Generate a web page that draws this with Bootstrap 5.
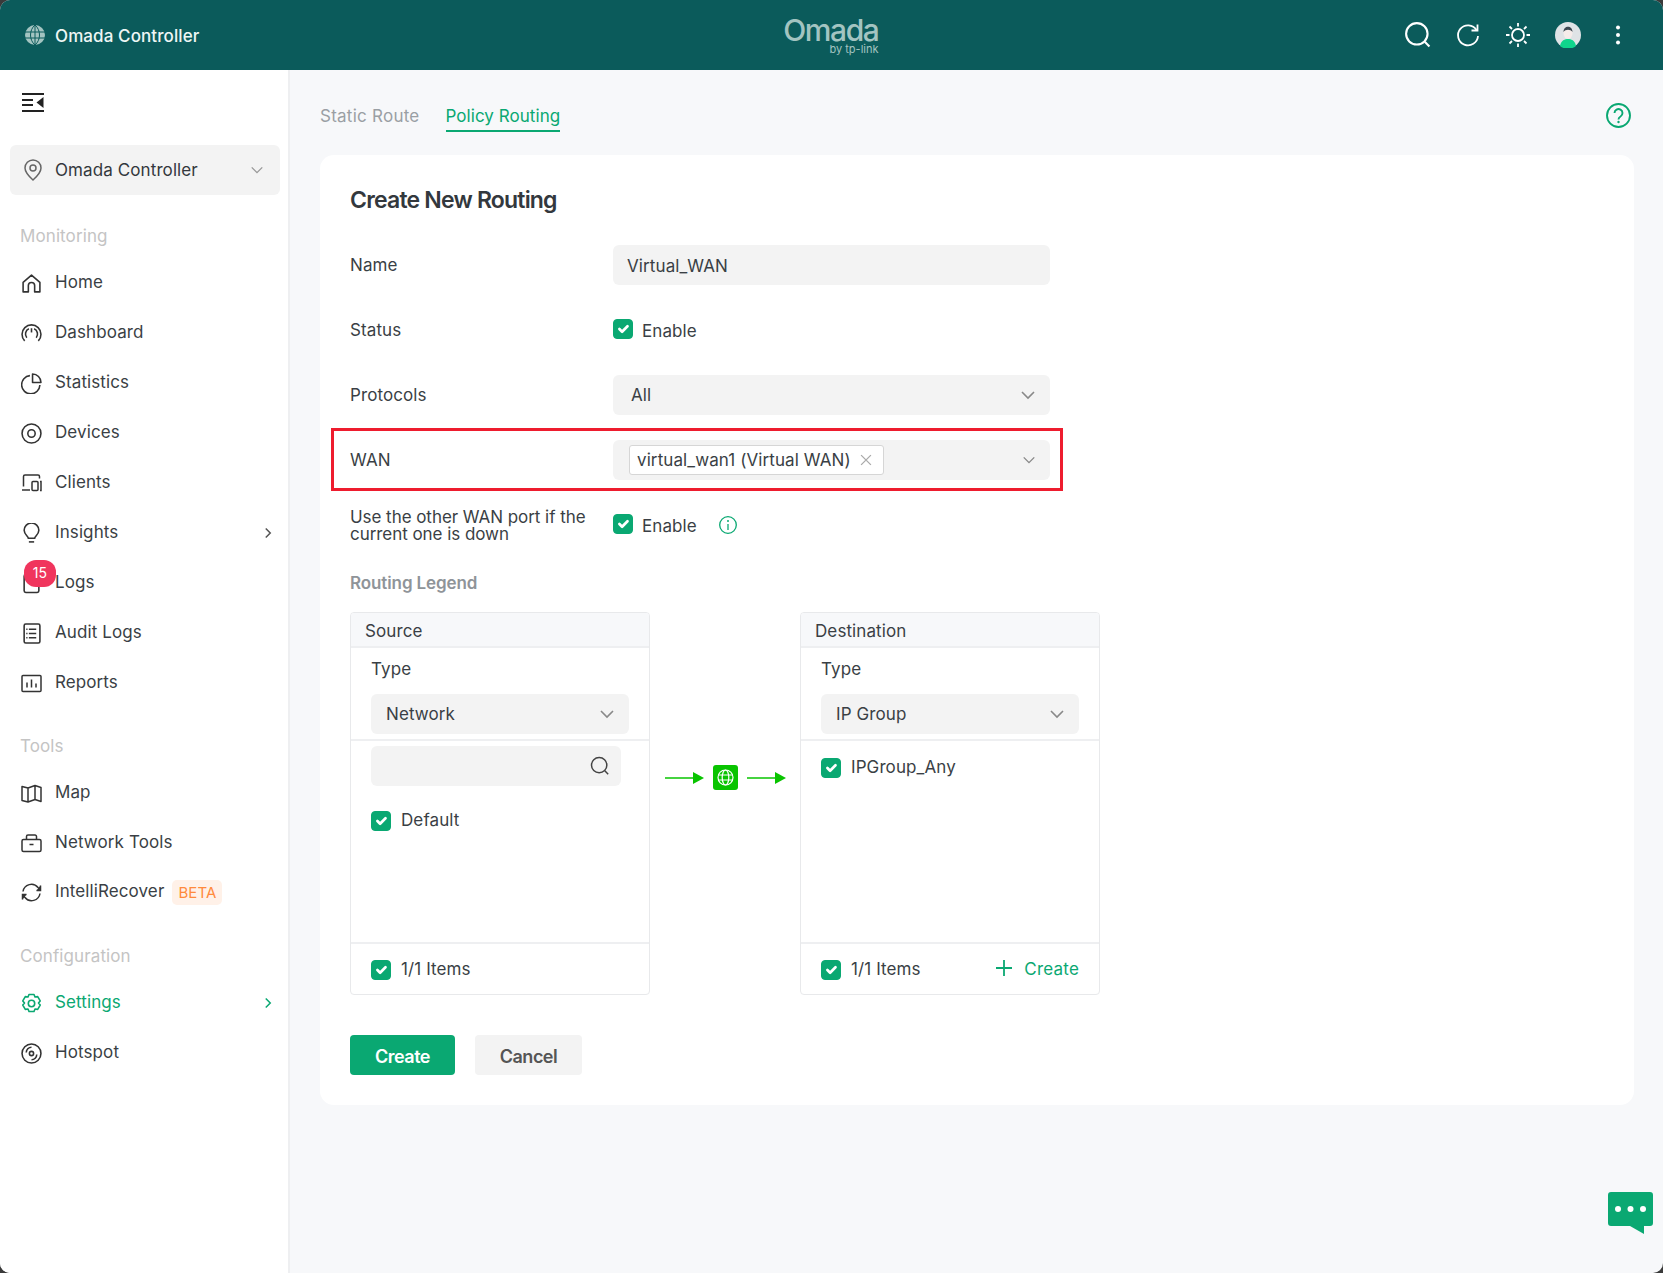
<!DOCTYPE html>
<html lang="en">
<head>
<meta charset="utf-8">
<title>Omada Controller</title>
<link href="https://cdn.jsdelivr.net/npm/bootstrap@5.3.0/dist/css/bootstrap.min.css" rel="stylesheet">
<style>
html,body{height:100%;margin:0;overflow:hidden}
body{background:#3a3a3a;font-family:Inter,"Noto Sans",sans-serif;font-size:17px;color:#3a3f45;letter-spacing:.1px}
.om-shell{height:100vh;border-radius:10px;overflow:hidden;background:#f7f8fa}
.om-top{height:70px;background:#0b5b5b;color:#fff}
.om-brand{flex:1 1 0;padding-left:24px;gap:9px;font-size:17px;font-weight:500;color:#eef6f5}
.om-brand span{padding-top:3px}
.om-logo{color:#a3c4c1;width:96px;text-align:right;padding-top:2px;margin-left:6px}
.om-logo-main{font-size:30px;font-weight:500;letter-spacing:-1.4px;line-height:26px}
.om-logo-sub{font-size:11px;letter-spacing:0;line-height:13px}
.om-top-tools{flex:1 1 0;gap:24px;padding-right:32px}
.om-top-tools svg{display:block}
.om-top-tools .om-top-find{margin-right:-1px}
.om-body{height:calc(100vh - 70px)}
.om-side{width:290px;background:#fff;border-right:2px solid #eeeff1;flex:none;padding:0 8px 0 10px}
.om-toggle{height:75px;padding:0 0 33px 12px}
.om-site{height:50px;background:#f3f3f3;border-radius:6px;padding:2px 16px 0 13px;gap:12px;color:#33383d;width:270px}
.om-site svg{margin-top:-2px}
.om-head{height:30px;line-height:30px;color:#c4c4c4;padding-left:10px;margin:23px 0 7px}
.om-head-first{margin-top:26px}
.om-item{height:50px;padding:0 6px 0 11px;gap:13px;color:#3a3f45;position:relative;text-decoration:none}
.om-item svg.om-ic{flex:none;width:21px;height:21px}
.om-active{color:#0aa872}
.om-count{position:absolute;left:14px;top:2px;width:32px;height:27px;border-radius:12px;background:#f0355d;font-size:14px;font-weight:400;padding:0;line-height:26px}
.om-beta{background:#fff1e8;color:#ff8a3c;font-size:15px;font-weight:400;border-radius:5px;padding:4px 6px;margin-left:-5px;line-height:17px}
.om-main{padding:0 29px 0 30px;min-width:0}
.om-tabs{height:85px;gap:26px;padding-top:5px}
.om-tab{color:#9a9fa4;padding:6px 0 1px;text-decoration:none;letter-spacing:.25px;border-bottom:2px solid transparent}
.om-tab-on{color:#0aa872;border-bottom-color:#0aa872;letter-spacing:.05px}
.om-help{margin-left:auto;margin-right:3px}
.om-panel{height:950px;background:#fff;border-radius:14px;padding:30px}
.om-title{font-size:23px;font-weight:600;line-height:30px;margin:0 0 30px;color:#33383d;letter-spacing:-.8px}
.om-row{height:40px;margin-bottom:25px}
.om-label{width:263px;flex:none;line-height:17px;padding:1px 12px 0 0}
.om-label-wrap{letter-spacing:-.05px}
.om-lbl{gap:9px;padding-top:3px}
.om-info{margin-left:22px}
.om-field{width:437px}
.om-field.form-control,.om-field.form-select{height:40px;background-color:#f3f3f3;border:0;border-radius:6px;font-size:17px;color:#3a3f45;letter-spacing:.1px}
.om-field.form-control{padding:2px 14px 0}
.om-pick{padding:2px 18px 0;background-size:16px 16px;background-position:right 14px center;background-image:url("data:image/svg+xml,%3csvg xmlns='http://www.w3.org/2000/svg' viewBox='0 0 16 16'%3e%3cpath fill='none' stroke='%23888' stroke-width='1.6' d='M2 5l6 6 6-6'/%3e%3c/svg%3e")}
.om-wan{position:relative;margin-bottom:25px}
.om-wan-frame{position:absolute;left:-19px;top:-12px;width:732px;height:63px;border:3px solid #ee1c2e;pointer-events:none}
.om-multi{height:40px;background:#f3f3f3;border-radius:6px;padding:0 14px 0 16px}
.om-tag{height:30px;padding:2px 11px 0 7px;background:#fff;border:1px solid #d6d6d6;border-radius:3px;gap:9px}
.om-tag svg{margin-top:-2px}
.form-check-input.om-check{width:20px;height:20px;margin:0;border-radius:4px;flex:none;background-color:#0aa872;border-color:#0aa872;background-size:18px}
.om-lbl .form-check-input.om-check{margin-top:-5px}
.om-legend{height:25px;line-height:24px;padding-top:1px;margin:0 0 17px;color:#8f9499;font-weight:600;font-size:17px;letter-spacing:-.1px}
.om-box{width:300px;height:383px;border:1px solid #e8e9eb;border-radius:4px;overflow:hidden;background:#fff}
.om-box-head{height:35px;line-height:36px;padding:0 14px;background:#f7f8fa;border-bottom:2px solid #eeeff1}
.om-box-type{padding:9px 20px 0;height:93px;border-bottom:2px solid #eeeff1}
.om-box-type .form-select{width:258px;margin-top:13px;padding:2px 15px 0}
.om-box-list{flex:1;padding:5px 20px 0}
.om-lab-type{line-height:24px}
.om-search{width:250px;height:40px;background:#f3f3f3;border-radius:6px;padding:0 11px 0 0}
.om-search input{flex:1;min-width:0;background:none;border:0;outline:0}
.om-opt{gap:10px;height:40px;padding-top:3px}
.om-box-foot{height:52px;border-top:2px solid #eeeff1;padding:1px 20px 0;gap:10px}
.om-mid{width:150px;height:331px;gap:9px;padding-left:15px}
.om-arrow{width:39px;height:14px;display:block}
.om-globe{width:25px;height:25px;background:#09c400;border-radius:3px}
.om-create{color:#0aa872;gap:11px;text-decoration:none;letter-spacing:.2px}
.om-create svg{margin-top:-3px}
.om-actions{margin-top:40px;gap:20px}
.om-btn{height:40px;border-radius:4px;padding:2px 0 0;font-size:18px;font-weight:600;border:0;letter-spacing:-.5px}
.om-btn-go,.om-btn-go:hover{width:105px;background:#0aa872;color:#fff}
.om-btn-no,.om-btn-no:hover{width:107px;background:#f3f3f3;color:#555}
.om-chat{position:fixed;right:10px;bottom:39px;display:block}
</style>
</head>
<body>
<svg width="0" height="0" class="position-absolute">
  <symbol id="chev" viewBox="0 0 16 16"><path fill="none" stroke="currentColor" stroke-width="1.6" d="M2 5l6 6 6-6"/></symbol>
  <symbol id="chevr" viewBox="0 0 16 16"><path fill="none" stroke="currentColor" stroke-width="2" d="M5 2l6 6-6 6"/></symbol>
  <symbol id="mag" viewBox="0 0 24 24"><circle cx="11" cy="11" r="9.200" fill="none" stroke="currentColor" stroke-width="1.800"/><path d="M17.800 17.800l4 4" stroke="currentColor" stroke-width="1.800" fill="none"/></symbol>
</svg>
<div class="om-shell d-flex flex-column">
  <header class="om-top d-flex align-items-center">
    <div class="om-brand d-flex align-items-center">
      <svg width="22" height="22" viewBox="0 0 22 22"><circle cx="11" cy="11" r="10" fill="#a3c4c1"/><path d="M11 1v20M1 8h20M1 14h20M11 1c-6 5-6 15 0 20M11 1c6 5 6 15 0 20" fill="none" stroke="#0b5b5b" stroke-width="1"/></svg>
      <span>Omada Controller</span>
    </div>
    <div class="om-logo">
      <div class="om-logo-main">Omada</div>
      <div class="om-logo-sub">by tp-link</div>
    </div>
    <div class="om-top-tools d-flex justify-content-end align-items-center">
      <svg class="om-top-find" width="28" height="28" style="color:#fff"><use href="#mag"/></svg>
      <svg width="26" height="26" viewBox="0 0 26 26" fill="none" stroke="#fff" stroke-width="1.8"><path d="M21.5 8A10 10 0 1 0 23 14"/><path d="M22.5 2.5V8.5H16.5"/></svg>
      <svg width="26" height="26" viewBox="0 0 26 26" fill="none" stroke="#fff" stroke-width="1.8"><circle cx="13" cy="13" r="6"/><path d="M13 1v3.5M13 21.5V25M1 13h3.5M21.5 13H25M4.5 4.5l2.5 2.5M19 19l2.5 2.5M4.5 21.5L7 19M19 7l2.5-2.5"/></svg>
      <svg width="26" height="26" viewBox="0 0 26 26"><circle cx="13" cy="13" r="13" fill="#dfe3e6"/><path d="M5 24c1-6 5-7 8-7s7 1 8 7a13 13 0 0 1-16 0z" fill="#0fd58c"/><ellipse cx="13" cy="11" rx="4.5" ry="6" fill="#f6ecea"/><path d="M8.500 10c0-7 9-7 9 0-2-3-7-3-9 0z" fill="#3c4650"/></svg>
      <svg width="26" height="26" viewBox="0 0 26 26" fill="#fff"><circle cx="13" cy="5.500" r="2"/><circle cx="13" cy="13" r="2"/><circle cx="13" cy="20.500" r="2"/></svg>
    </div>
  </header>
  <div class="om-body d-flex">
    <aside class="om-side">
      <div class="om-toggle d-flex align-items-end">
        <svg width="22" height="19" viewBox="0 0 22 19" fill="#222"><rect width="22" height="2"/><rect y="17" width="22" height="2"/><rect y="6" width="11" height="2"/><rect y="11" width="11" height="2"/><path d="M21.500 4v11l-7-5.500z"/></svg>
      </div>
      <div class="om-site d-flex align-items-center">
        <svg width="20" height="22" viewBox="0 0 20 22" fill="none" stroke="#666" stroke-width="1.5"><path d="M10 21C5 16.500 2 13 2 9a8 8 0 0 1 16 0c0 4-3 7.500-8 12z"/><circle cx="10" cy="9" r="3"/></svg>
        <span class="flex-grow-1">Omada Controller</span>
        <svg width="14" height="14" style="color:#999"><use href="#chev"/></svg>
      </div>
      <div class="om-head om-head-first">Monitoring</div>
      <a class="om-item d-flex align-items-center" href="#"><svg class="om-ic" viewBox="0 0 20 20" fill="none" stroke="#333" stroke-width="1.5"><path d="M2 9l8-7 8 7v9H13v-6a3 3 0 0 0-6 0v6H2z" stroke-linejoin="round"/></svg>Home</a>
      <a class="om-item d-flex align-items-center" href="#"><svg class="om-ic" viewBox="0 0 20 20" fill="none" stroke="#333" stroke-width="1.5"><path d="M3.500 17A9 9 0 1 1 16.500 17"/><path d="M5.500 14a5.500 5.500 0 0 1 2-8.500M12.500 5.500a5.500 5.500 0 0 1 2 8.500"/><path d="M10 5v4"/></svg>Dashboard</a>
      <a class="om-item d-flex align-items-center" href="#"><svg class="om-ic" viewBox="0 0 20 20" fill="none" stroke="#333" stroke-width="1.5"><path d="M8.500 2.500A8.700 8.700 0 1 0 18 11.500"/><path d="M11 1a8 8 0 0 1 8 8h-8z" stroke-linejoin="round"/></svg>Statistics</a>
      <a class="om-item d-flex align-items-center" href="#"><svg class="om-ic" viewBox="0 0 20 20" fill="none" stroke="#333" stroke-width="1.5"><circle cx="10" cy="10" r="9"/><circle cx="10" cy="10" r="3.500"/></svg>Devices</a>
      <a class="om-item d-flex align-items-center" href="#"><svg class="om-ic" viewBox="0 0 21 20" fill="none" stroke="#333" stroke-width="1.5"><path d="M2.500 13V3a1.500 1.500 0 0 1 1.500-1.500h13A1.500 1.500 0 0 1 18.500 3v2"/><path d="M1 16.500h8"/><rect x="11" y="8" width="6" height="9" rx="1"/><path d="M19 8h1v9h-1"/></svg>Clients</a>
      <a class="om-item d-flex align-items-center" href="#"><svg class="om-ic" viewBox="0 0 20 20" fill="none" stroke="#333" stroke-width="1.5"><path d="M7 14.500c0-2-4-3.500-4-7.500a7 7 0 0 1 14 0c0 4-4 5.500-4 7.500z"/><path d="M7.500 18h5"/></svg><span class="flex-grow-1">Insights</span><svg width="12" height="12" style="color:#555"><use href="#chevr"/></svg></a>
      <a class="om-item d-flex align-items-center" href="#"><svg class="om-ic" viewBox="0 0 20 20" fill="none" stroke="#333" stroke-width="1.5"><rect x="3" y="1.500" width="14" height="17" rx="1.500"/></svg>Logs<span class="badge om-count">15</span></a>
      <a class="om-item d-flex align-items-center" href="#"><svg class="om-ic" viewBox="0 0 20 20" fill="none" stroke="#333" stroke-width="1.5"><rect x="3" y="1" width="15" height="18" rx="1.500"/><path d="M7.500 6h7M7.500 10h7M7.500 14h7M5 6h1.200M5 10h1.200M5 14h1.200"/></svg>Audit Logs</a>
      <a class="om-item d-flex align-items-center" href="#"><svg class="om-ic" viewBox="0 0 21 20" fill="none" stroke="#333" stroke-width="1.5"><rect x="1" y="2" width="19" height="16" rx="1"/><path d="M6 9v5M10.500 6v8M15 10v4"/></svg>Reports</a>
      <div class="om-head">Tools</div>
      <a class="om-item d-flex align-items-center" href="#"><svg class="om-ic" viewBox="0 0 21 20" fill="none" stroke="#333" stroke-width="1.5" stroke-linejoin="round"><path d="M1 3l6 1.500 7-2.500 6 2v14l-6-2-7 2.500L1 17zM7 4.500v14M14 2v14"/></svg>Map</a>
      <a class="om-item d-flex align-items-center" href="#"><svg class="om-ic" viewBox="0 0 21 20" fill="none" stroke="#333" stroke-width="1.5"><rect x="1" y="6" width="19" height="12" rx="1.500"/><path d="M5.500 6V3a1.500 1.500 0 0 1 1.500-1.500h7A1.500 1.500 0 0 1 15.500 3v3M8.500 11h4"/></svg>Network Tools</a>
      <a class="om-item d-flex align-items-center" href="#" style="padding-bottom:2px"><svg class="om-ic" viewBox="0 0 21 20" fill="none" stroke="#333" stroke-width="1.500"><path d="M2 9a8.500 8.500 0 0 1 15-4l2 2"/><path d="M19 11a8.500 8.500 0 0 1-15 4l-2-2"/><path d="M19.500 3v5h-4M1.500 17v-5h4" fill="#333"/></svg>IntelliRecover<span class="badge om-beta">BETA</span></a>
      <div class="om-head">Configuration</div>
      <a class="om-item om-active d-flex align-items-center" href="#"><svg class="om-ic" viewBox="0 0 21 21" fill="none" stroke="#0aa872" stroke-width="1.600" stroke-linejoin="round"><path d="M8 1.500h5l1 2.500 2.700-.4 2.500 4.300-1.700 2.100 1.700 2.100-2.500 4.300-2.700-.4-1 2.500H8l-1-2.500-2.700.4-2.500-4.300 1.700-2.100-1.700-2.100 2.500-4.300 2.700.4z"/><circle cx="10.500" cy="10.500" r="3.200"/></svg><span class="flex-grow-1">Settings</span><svg width="12" height="12" style="color:#0aa872"><use href="#chevr"/></svg></a>
      <a class="om-item d-flex align-items-center" href="#"><svg class="om-ic" viewBox="0 0 20 20" fill="none" stroke="#333" stroke-width="1.500"><circle cx="10" cy="10" r="9"/><circle cx="10" cy="10" r="2"/><path d="M5 9a5 5 0 0 1 5-5M15 11a5 5 0 0 1-5 5"/></svg>Hotspot</a>
    </aside>
    <main class="om-main flex-grow-1">
      <nav class="om-tabs d-flex align-items-center">
        <a class="om-tab" href="#">Static Route</a>
        <a class="om-tab om-tab-on" href="#">Policy Routing</a>
        <svg class="om-help" width="25" height="25" viewBox="0 0 25 25" fill="none" stroke="#0aa872" stroke-width="1.900"><circle cx="12.500" cy="12.500" r="11.500"/><path d="M8.500 10a4 4 0 1 1 6 3.500c-1.500.9-2 1.500-2 3"/><circle cx="12.500" cy="19" r="1.200" fill="#0aa872" stroke="none"/></svg>
      </nav>
      <section class="om-panel">
        <h2 class="om-title">Create New Routing</h2>
        <div class="om-row d-flex align-items-center">
          <label class="om-label" for="f-name">Name</label>
          <input id="f-name" class="form-control om-field" value="Virtual_WAN">
        </div>
        <div class="om-row d-flex align-items-center">
          <span class="om-label">Status</span>
          <label class="om-lbl d-flex align-items-center"><input class="form-check-input om-check" type="checkbox" checked> Enable</label>
        </div>
        <div class="om-row d-flex align-items-center">
          <label class="om-label" for="f-proto">Protocols</label>
          <select id="f-proto" class="form-select om-field om-pick"><option>All</option></select>
        </div>
        <div class="om-wan d-flex align-items-center">
          <div class="om-wan-frame"></div>
          <span class="om-label">WAN</span>
          <div class="om-multi om-field d-flex align-items-center justify-content-between">
            <span class="om-tag d-flex align-items-center">virtual_wan1 (Virtual WAN)
              <svg width="12" height="12" viewBox="0 0 11 11" stroke="#aaa" stroke-width="1.200"><path d="M1 1l9 9M10 1l-9 9"/></svg>
            </span>
            <svg width="14" height="14" style="color:#888"><use href="#chev"/></svg>
          </div>
        </div>
        <div class="om-row d-flex align-items-center">
          <span class="om-label om-label-wrap">Use the other WAN port if the current one is down</span>
          <label class="om-lbl d-flex align-items-center"><input class="form-check-input om-check" type="checkbox" checked> Enable</label>
          <svg class="om-info" width="18" height="18" viewBox="0 0 18 18" fill="none" stroke="#0aa872" stroke-width="1.300"><circle cx="9" cy="9" r="8.300"/><path d="M9 8v6"/><circle cx="9" cy="5" r="1" fill="#0aa872" stroke="none"/></svg>
        </div>
        <div class="om-legend">Routing Legend</div>
        <div class="d-flex">
          <div class="om-box d-flex flex-column">
            <div class="om-box-head">Source</div>
            <div class="om-box-type">
              <div class="om-lab-type">Type</div>
              <select class="form-select om-field om-pick" aria-label="Source type"><option>Network</option></select>
            </div>
            <div class="om-box-list">
              <div class="om-search d-flex align-items-center">
                <input aria-label="Search">
                <svg width="20" height="20" style="color:#444"><use href="#mag"/></svg>
              </div>
              <label class="om-opt d-flex align-items-center" style="margin-top:13px"><input class="form-check-input om-check" type="checkbox" checked> Default</label>
            </div>
            <div class="om-box-foot d-flex align-items-center"><input class="form-check-input om-check" type="checkbox" checked aria-label="All"> 1/1 Items</div>
          </div>
          <div class="om-mid d-flex align-items-center">
            <svg class="om-arrow" viewBox="0 0 39 14"><path d="M0 7h28" stroke="#09c400" stroke-width="1.500"/><path d="M28 1l11 6-11 6z" fill="#09c400"/></svg>
            <span class="om-globe d-flex align-items-center justify-content-center"><svg width="17" height="17" viewBox="0 0 17 17" fill="none" stroke="#fff" stroke-width="1.200"><circle cx="8.500" cy="8.500" r="7.500"/><ellipse cx="8.500" cy="8.500" rx="3.300" ry="7.500"/><path d="M1 6h15M1 11h15"/></svg></span>
            <svg class="om-arrow" viewBox="0 0 39 14"><path d="M0 7h28" stroke="#09c400" stroke-width="1.500"/><path d="M28 1l11 6-11 6z" fill="#09c400"/></svg>
          </div>
          <div class="om-box d-flex flex-column">
            <div class="om-box-head">Destination</div>
            <div class="om-box-type">
              <div class="om-lab-type">Type</div>
              <select class="form-select om-field om-pick" aria-label="Destination type"><option>IP Group</option></select>
            </div>
            <div class="om-box-list">
              <label class="om-opt d-flex align-items-center"><input class="form-check-input om-check" type="checkbox" checked> IPGroup_Any</label>
            </div>
            <div class="om-box-foot d-flex align-items-center"><input class="form-check-input om-check" type="checkbox" checked aria-label="All"> <span class="flex-grow-1">1/1 Items</span>
              <a class="om-create d-flex align-items-center" href="#"><svg width="18" height="18" viewBox="0 0 18 18" stroke="#0aa872" stroke-width="1.800"><path d="M9 1v16M1 9h16"/></svg>Create</a>
            </div>
          </div>
        </div>
        <div class="om-actions d-flex">
          <button class="btn om-btn om-btn-go" type="button">Create</button>
          <button class="btn om-btn om-btn-no" type="button">Cancel</button>
        </div>
      </section>
    </main>
  </div>
  <svg class="om-chat" width="45" height="42" viewBox="0 0 45 42"><path d="M3 0h39a3 3 0 0 1 3 3v28a3 3 0 0 1-3 3h-6v8l-14-8H3a3 3 0 0 1-3-3V3a3 3 0 0 1 3-3z" fill="#0aa872"/><circle cx="10" cy="17" r="3" fill="#fff"/><circle cx="22.500" cy="17" r="3" fill="#fff"/><circle cx="35" cy="17" r="3" fill="#fff"/></svg>
</div>
<script src="https://cdn.jsdelivr.net/npm/bootstrap@5.3.0/dist/js/bootstrap.bundle.min.js"></script>
</body>
</html>
